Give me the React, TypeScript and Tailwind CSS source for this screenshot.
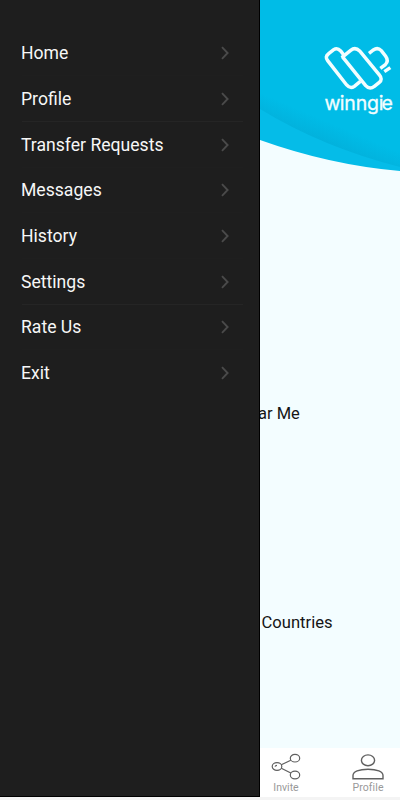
import React from 'react';

const items = ['Home', 'Profile', 'Transfer Requests', 'Messages', 'History', 'Settings', 'Rate Us', 'Exit'];

function Chevron() {
  return (
    <svg width="8" height="14" viewBox="0 0 8 14" fill="none" stroke="#4a4a4a" strokeWidth="1.9">
      <path d="M1 1.2 L6.6 7 L1 12.8" />
    </svg>
  );
}

function Header() {
  return (
    <svg className="block shrink-0" width="140" height="174" viewBox="0 0 140 174">
      <defs>
        <linearGradient id="shade" gradientUnits="userSpaceOnUse" x1="62" y1="144" x2="71" y2="123">
          <stop offset="0" stopColor="#02b0db" />
          <stop offset="1" stopColor="#00bce7" />
        </linearGradient>
      </defs>
      <path d="M0 0H140V171Q70 165 0 140Z" fill="#05bce8" />
      <path d="M0 0H140V167Q62 147 0 109Z" fill="url(#shade)" />
      <g transform="translate(60 41.3) scale(0.33333)" fill="none" stroke="#f2feff" strokeWidth="10.5">
        <path d="M72 42L62 29Q52 18 41 25L25 38Q14 46 23 58L80 131Q91 144 103 135L121 120" />
        <path d="M65 49L92 27Q106 16 119 29L178 101Q189 114 178 123L163 135Q149 146 137 133L67 46" />
        <path d="M147 36L160 26Q173 17 184 28L197 45Q207 59 196 70L181 81" />
        <path d="M193 91L211 79" />
      </g>
      <text x="64.4 79.7 84.2 95.8 107.1 118.7 121.4" y="109.5" fontSize="19.5" fill="#f2feff" stroke="#f2feff" strokeWidth="0.3" className="font-['Inter',sans-serif]">winngie</text>
    </svg>
  );
}

function InviteIcon() {
  return (
    <svg width="30" height="27" viewBox="0 0 30 27" fill="none" stroke="#606060" strokeWidth="1.2">
      <ellipse cx="6" cy="13.5" rx="4.8" ry="3.8" />
      <ellipse cx="24" cy="5.2" rx="4.7" ry="3.8" />
      <ellipse cx="24" cy="22" rx="4.7" ry="3.8" />
      <path d="M10.3 11.8L19.8 7.2M10.3 15.2L19.8 20M4 13.6Q4.4 12.4 6 12.3" />
    </svg>
  );
}

function ProfileIcon() {
  return (
    <svg width="32" height="26" viewBox="0 0 32 26" fill="none" stroke="#606060" strokeWidth="1.4">
      <ellipse cx="16" cy="6.3" rx="6.6" ry="5.4" />
      <path d="M1 24.8V21.5C1 17.6 7 15.2 16 15.2S31 17.6 31 21.5V24.8Z" />
    </svg>
  );
}

export default function App() {
  return (
    <div className="h-[800px] w-[400px] overflow-hidden bg-[#f4f4f4] font-['Roboto',sans-serif]">
      <div className="flex h-[797px]">
        <nav className="z-10 w-[260px] shrink-0 border-r border-b border-black bg-[#1e1e1e] pt-[30.5px]">
          {items.map((label, i) => (
            <div key={label} className="relative flex h-[45.7px] items-center justify-between pr-[30px] pl-[21px] text-[17.6px] text-[#f7f7f7]">
              <span className="whitespace-nowrap">{label}</span>
              <Chevron />
              {i < 7 && <span className={i === 1 || i === 5 ? 'absolute right-[16px] bottom-0 left-[22px] h-px bg-[#252525]' : 'absolute right-[16px] bottom-0 left-[22px] h-px bg-[#1f1f1f]'} />}
            </div>
          ))}
        </nav>
        <main className="flex w-[140px] flex-col bg-[#f3fdff]">
          <Header />
          <div className="mt-[228px] -ml-[2px] h-6 text-[16.5px] leading-6 whitespace-nowrap text-[#151515]">ar Me</div>
          <div className="mt-[185px] ml-[1.5px] h-6 text-[16.6px] leading-6 whitespace-nowrap text-[#151515]">Countries</div>
          <footer className="mt-auto flex h-[49px] shrink-0 bg-white text-[10.5px] leading-3 text-[#999999]">
            <div className="flex w-[52px] flex-col items-center pt-[5px]">
              <InviteIcon />
              <span className="mt-[2px]">Invite</span>
            </div>
            <div className="ml-[30px] flex w-[52px] flex-col items-center pt-[6px]">
              <ProfileIcon />
              <span className="mt-[2px] tracking-[0.1px]">Profile</span>
            </div>
          </footer>
        </main>
      </div>
    </div>
  );
}
